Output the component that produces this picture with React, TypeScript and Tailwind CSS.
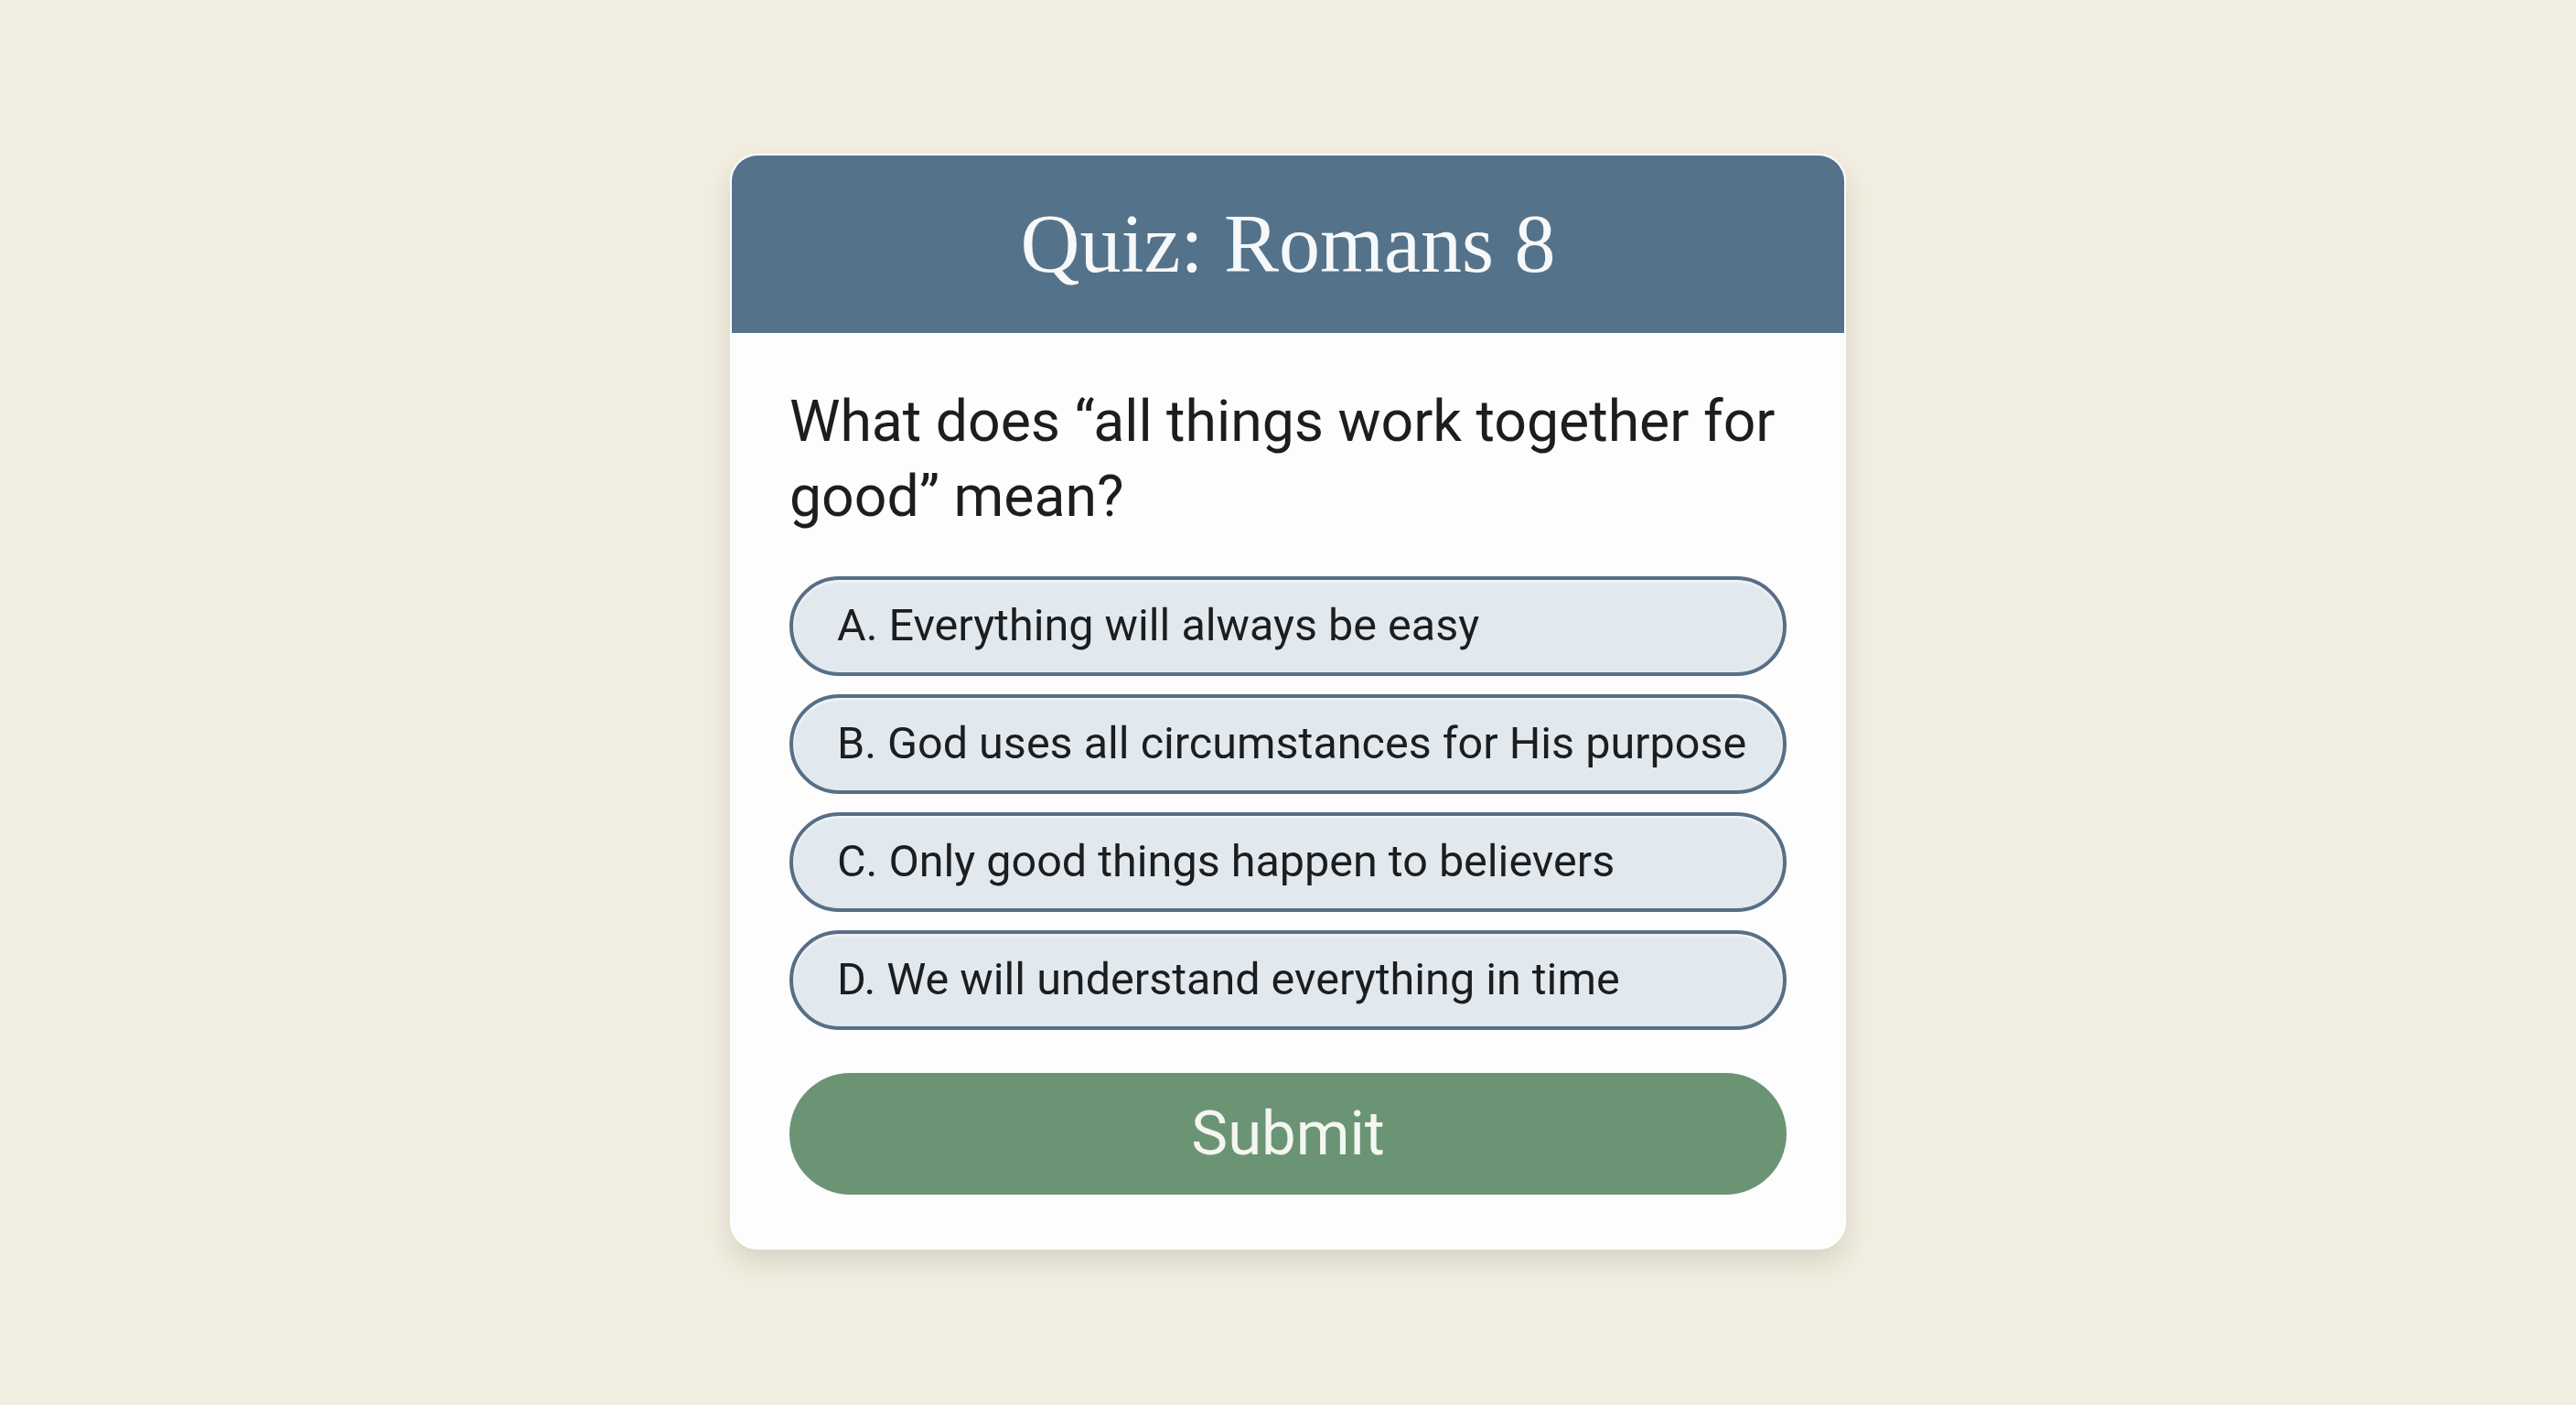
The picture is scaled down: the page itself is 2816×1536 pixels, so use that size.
import React from "react";

const options = [
  "A. Everything will always be easy",
  "B. God uses all circumstances for His purpose",
  "C. Only good things happen to believers",
  "D. We will understand everything in time",
];

export default function App() {
  return (
    <div className="min-h-screen w-full bg-[#f2efe2] flex justify-center pt-[168px] font-['Roboto',sans-serif]">
      <div className="w-[1220px] h-[1198px] rounded-[30px] bg-[#fdfdfd] shadow-[0_14px_30px_rgba(120,110,80,0.22)] border-2 border-white overflow-hidden flex flex-col">
        <div className="h-[194px] bg-[#54738b] flex items-center justify-center">
          <h1 className="font-['Liberation_Serif',serif] text-[90px] leading-none text-[#f7f8f9]">
            Quiz: Romans 8
          </h1>
        </div>
        <div className="flex flex-col px-[63px] pt-[56px]">
          <p className="text-[62.5px] leading-[82px] text-[#1b1d1f]">
            What does “all things work together for good” mean?
          </p>
          <div className="mt-[46px] flex flex-col gap-[20px]">
            {options.map((o) => (
              <button
                key={o}
                className="h-[109px] w-full rounded-full border-[4px] border-[#576f86] bg-[#e2e9ee] text-left pl-[48px] text-[48.5px] text-[#1b1d1f] shadow-[inset_0_2px_3px_rgba(255,255,255,0.7)]"
              >
                {o}
              </button>
            ))}
          </div>
          <button className="mt-[47px] h-[133px] w-full rounded-full bg-[#6b9475] text-[67px] text-[#f4f6f2]">
            Submit
          </button>
        </div>
      </div>
    </div>
  );
}
